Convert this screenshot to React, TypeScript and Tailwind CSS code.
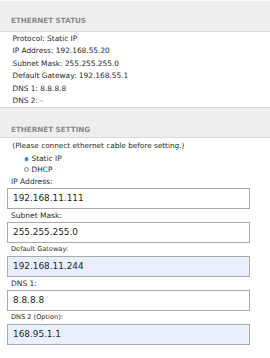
import React from "react";

const font = { fontFamily: '"DejaVu Sans", Verdana, sans-serif' };

function Field({ label, value, small, blue }: { label: string; value: string; small?: boolean; blue?: boolean }) {
  return (
    <div className="flex flex-col">
      <div className={`h-[13px] flex items-center pl-[11px] text-[#2a2a2a] ${small ? "text-[6.6px]" : "text-[7.5px]"}`}>{label}</div>
      <div className="pl-[7px] pr-[20px]">
        <div
          className={`h-[21px] border border-[#a9a9a9] flex items-center pl-[5px] text-[8.9px] text-[#1e1e1e] ${blue ? "bg-[#e8f0fe]" : "bg-white"}`}
        >
          {value}
        </div>
      </div>
    </div>
  );
}

export default function App() {
  const status = [
    "Protocol: Static IP",
    "IP Address: 192.168.55.20",
    "Subnet Mask: 255.255.255.0",
    "Default Gateway: 192.168.55.1",
    "DNS 1: 8.8.8.8",
    "DNS 2: -",
  ];
  return (
    <div className="w-[270px] h-[358px] bg-white overflow-hidden" style={font}>
      <div className="h-[32px] bg-[#eeeeee] border-t border-t-[#f8f8f8] border-b border-b-[#d9d9d9] flex items-end pb-[7px] pl-[11px]">
        <span className="text-[7.2px] font-bold text-[#8a8a8a] leading-none">ETHERNET STATUS</span>
      </div>
      <div className="flex flex-col pl-[12.5px] text-[7.4px] text-[#2a2a2a]">
        {status.map((s) => (
          <div key={s} className="h-[12.5px] flex items-center">{s}</div>
        ))}
      </div>
      <div className="h-[31px] bg-[#eeeeee] border-t border-t-[#d9d9d9] border-b border-b-[#d9d9d9] flex items-end pb-[4px] pl-[11px]">
        <span className="text-[7.2px] font-bold text-[#8a8a8a] leading-none">ETHERNET SETTING</span>
      </div>
      <div className="flex flex-col text-[#2a2a2a]">
        <div className="h-[16px] flex items-center pl-[12.3px] text-[7.3px]">(Please connect ethernet cable before setting.)</div>
        <div className="h-[10px] flex items-center pl-[24px] text-[7.4px] gap-[2.5px]">
          <span className="w-[5px] h-[5px] rounded-full bg-[#cfe0fb] flex items-center justify-center">
            <span className="w-[3.4px] h-[3.4px] rounded-full bg-[#2f7fe8]" />
          </span>
          <span>Static IP</span>
        </div>
        <div className="h-[11px] flex items-center pl-[24px] text-[7.4px] gap-[2.5px]">
          <span className="w-[5px] h-[5px] rounded-full border border-[#8c8c8c] bg-white" />
          <span>DHCP</span>
        </div>
        <Field label="IP Address:" value="192.168.11.111" />
        <Field label="Subnet Mask:" value="255.255.255.0" />
        <Field label="Default Gateway:" value="192.168.11.244" small blue />
        <Field label="DNS 1:" value="8.8.8.8" />
        <Field label="DNS 2 (Option):" value="168.95.1.1" small blue />
      </div>
    </div>
  );
}
